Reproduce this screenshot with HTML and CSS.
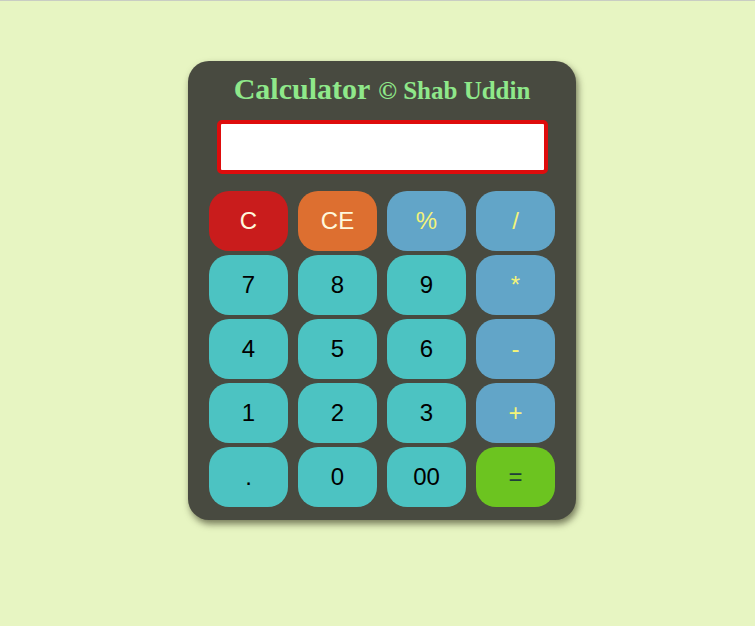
FILE: index.html
```html
<!DOCTYPE html>
<html>
<head>
<meta charset="utf-8">
<link rel="stylesheet" href="styles.css">
</head>
<body>
<div class="calc">
  <h1 class="title"><span class="big">Calculator</span> <span class="small">© Shab Uddin</span></h1>
  <div class="display"></div>
  <div class="keys">
    <button class="key clear">C</button>
    <button class="key ce">CE</button>
    <button class="key op">%</button>
    <button class="key op">/</button>
    <button class="key num">7</button>
    <button class="key num">8</button>
    <button class="key num">9</button>
    <button class="key op">*</button>
    <button class="key num">4</button>
    <button class="key num">5</button>
    <button class="key num">6</button>
    <button class="key op">-</button>
    <button class="key num">1</button>
    <button class="key num">2</button>
    <button class="key num">3</button>
    <button class="key op">+</button>
    <button class="key num">.</button>
    <button class="key num">0</button>
    <button class="key num">00</button>
    <button class="key eq">=</button>
  </div>
</div>
</body>
</html>
```
FILE: styles.css
```css
html {
  border-top: 1px solid #c9cdc3;
  background: #e7f5c2;
}
body {
  margin: 0;
  background: #e7f5c2;
  min-height: 625px;
}
.calc {
  margin: 60px 0 0 188px;
  width: 388px;
  height: 459px;
  box-sizing: border-box;
  background: #484a40;
  border-radius: 21px;
  box-shadow: 2px 4px 7px rgba(40, 40, 20, 0.6);
  padding: 10px 21px 0 21px;
  display: flex;
  flex-direction: column;
}
.title {
  margin: 0;
  text-align: center;
  font-family: "Liberation Serif", serif;
  font-weight: bold;
  color: #8fe88a;
  line-height: 34px;
  height: 36px;
}
.big { font-size: 30px; }
.small { font-size: 25px; }
.display {
  margin: 13px 7px 0 8px;
  height: 54px;
  box-sizing: border-box;
  background: #fff;
  border: 4px solid #de0c0c;
  border-radius: 5px;
}
.keys {
  margin-top: 17px;
  display: grid;
  grid-template-columns: repeat(4, 79px);
  grid-auto-rows: 60px;
  column-gap: 10px;
  row-gap: 4px;
}
.key {
  border: none;
  border-radius: 20px;
  font-family: "Liberation Sans", Arial, sans-serif;
  font-size: 24px;
  padding: 0;
  color: #000;
}
.clear { background: #c91c1c; color: #fff8dc; }
.ce { background: #dd6f30; color: #fff8dc; }
.op { background: #62a5c8; color: #f3f37a; }
.num { background: #4cc3c2; color: #000; }
.eq { background: #6cc420; color: #1f3f3a; }
```
